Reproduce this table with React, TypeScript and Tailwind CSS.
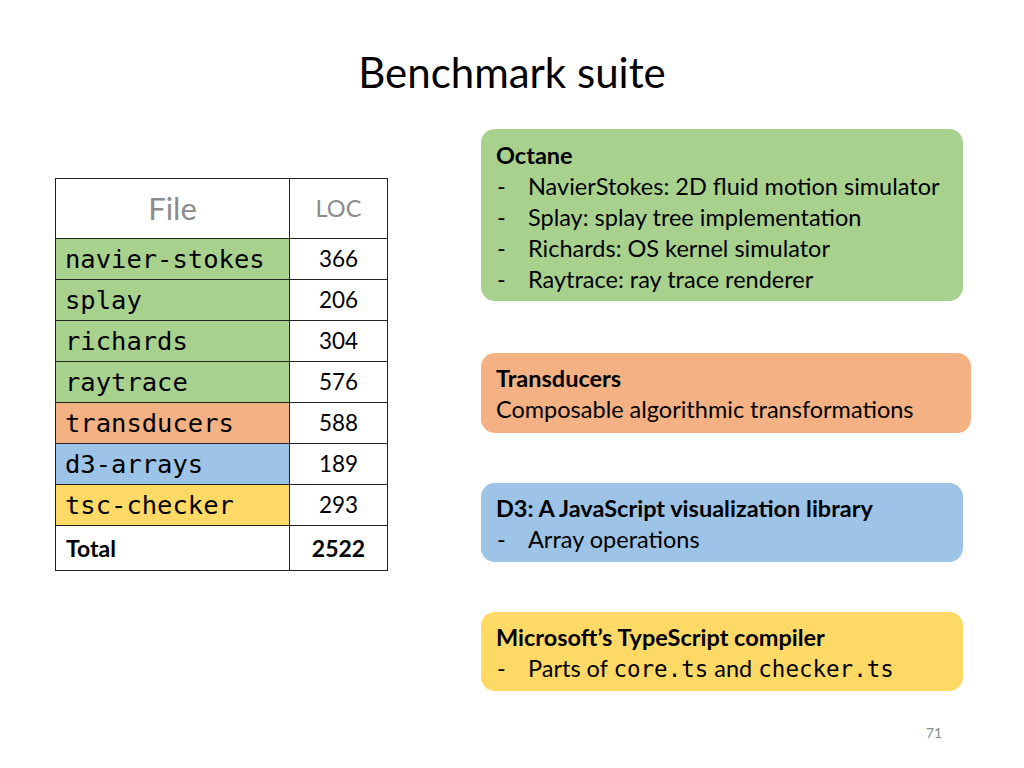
const ROWS = [
  { file: "navier-stokes", loc: "366", bg: "bg-[#a9d18e]" },
  { file: "splay", loc: "206", bg: "bg-[#a9d18e]" },
  { file: "richards", loc: "304", bg: "bg-[#a9d18e]" },
  { file: "raytrace", loc: "576", bg: "bg-[#a9d18e]" },
  { file: "transducers", loc: "588", bg: "bg-[#f4b183]" },
  { file: "d3-arrays", loc: "189", bg: "bg-[#9dc3e6]" },
  { file: "tsc-checker", loc: "293", bg: "bg-[#ffd966]" },
];

const mono = "font-['DejaVu_Sans_Mono',monospace]";

function Bullet({ children }: { children: React.ReactNode }) {
  return (
    <div className="flex">
      <span className="w-[32px] shrink-0 pl-[1px]">-</span>
      <span>{children}</span>
    </div>
  );
}

export default function App() {
  return (
    <div className="relative h-[768px] w-[1024px] overflow-hidden bg-white font-['Lato',sans-serif] text-black">
      <h1 className="pt-[46px] text-center text-[42px] leading-[52px]">Benchmark suite</h1>

      <div className="mt-[31px] flex">
        <div className="ml-[55px] mt-[49px] w-[333px]">
          <table className="w-full border-collapse">
            <tbody>
              <tr className="h-[60px]">
                <td className="w-[234px] border border-[#222] text-center text-[31px] text-[#8c8c8c]">File</td>
                <td className="border border-[#222] text-center text-[23.5px] text-[#8c8c8c]">LOC</td>
              </tr>
              {ROWS.map((r) => (
                <tr key={r.file} className="h-[41px]">
                  <td className={`border border-[#222] ${r.bg} pl-[9px] text-[25.5px] leading-[30px] ${mono}`}>{r.file}</td>
                  <td className="border border-[#222] text-center text-[22.5px]">{r.loc}</td>
                </tr>
              ))}
              <tr className="h-[45px]">
                <td className="border border-[#222] pl-[10px] text-[23px] font-bold">Total</td>
                <td className="border border-[#222] text-center text-[23px] font-bold">2522</td>
              </tr>
            </tbody>
          </table>
        </div>

        <div className="ml-[93px] flex flex-col text-[23.5px] leading-[31px]">
          <div className="w-[482px] rounded-[14px] bg-[#a9d18e] px-[15px] pt-[11px] pb-[6px]">
            <div className="font-bold">Octane</div>
            <Bullet>NavierStokes: 2D fluid motion simulator</Bullet>
            <Bullet>Splay: splay tree implementation</Bullet>
            <Bullet>Richards: OS kernel simulator</Bullet>
            <Bullet>Raytrace: ray trace renderer</Bullet>
          </div>

          <div className="mt-[52px] w-[490px] rounded-[14px] bg-[#f4b183] px-[15px] pt-[10px] pb-[8px]">
            <div className="font-bold">Transducers</div>
            <div>Composable algorithmic transformations</div>
          </div>

          <div className="mt-[50px] w-[482px] rounded-[14px] bg-[#9dc3e6] px-[15px] pt-[10px] pb-[7px]">
            <div className="font-bold">D3: A JavaScript visualization library</div>
            <Bullet>Array operations</Bullet>
          </div>

          <div className="mt-[50px] w-[482px] rounded-[14px] bg-[#ffd966] px-[15px] pt-[10px] pb-[7px]">
            <div className="font-bold">Microsoft’s TypeScript compiler</div>
            <Bullet>
              Parts of <span className={`${mono} text-[22.5px] leading-none`}>core.ts</span> and{" "}
              <span className={`${mono} text-[22.5px] leading-none`}>checker.ts</span>
            </Bullet>
          </div>
        </div>
      </div>

      <div className="absolute left-[926px] top-[722px] text-[14px] text-[#8c8c8c]">71</div>
    </div>
  );
}
